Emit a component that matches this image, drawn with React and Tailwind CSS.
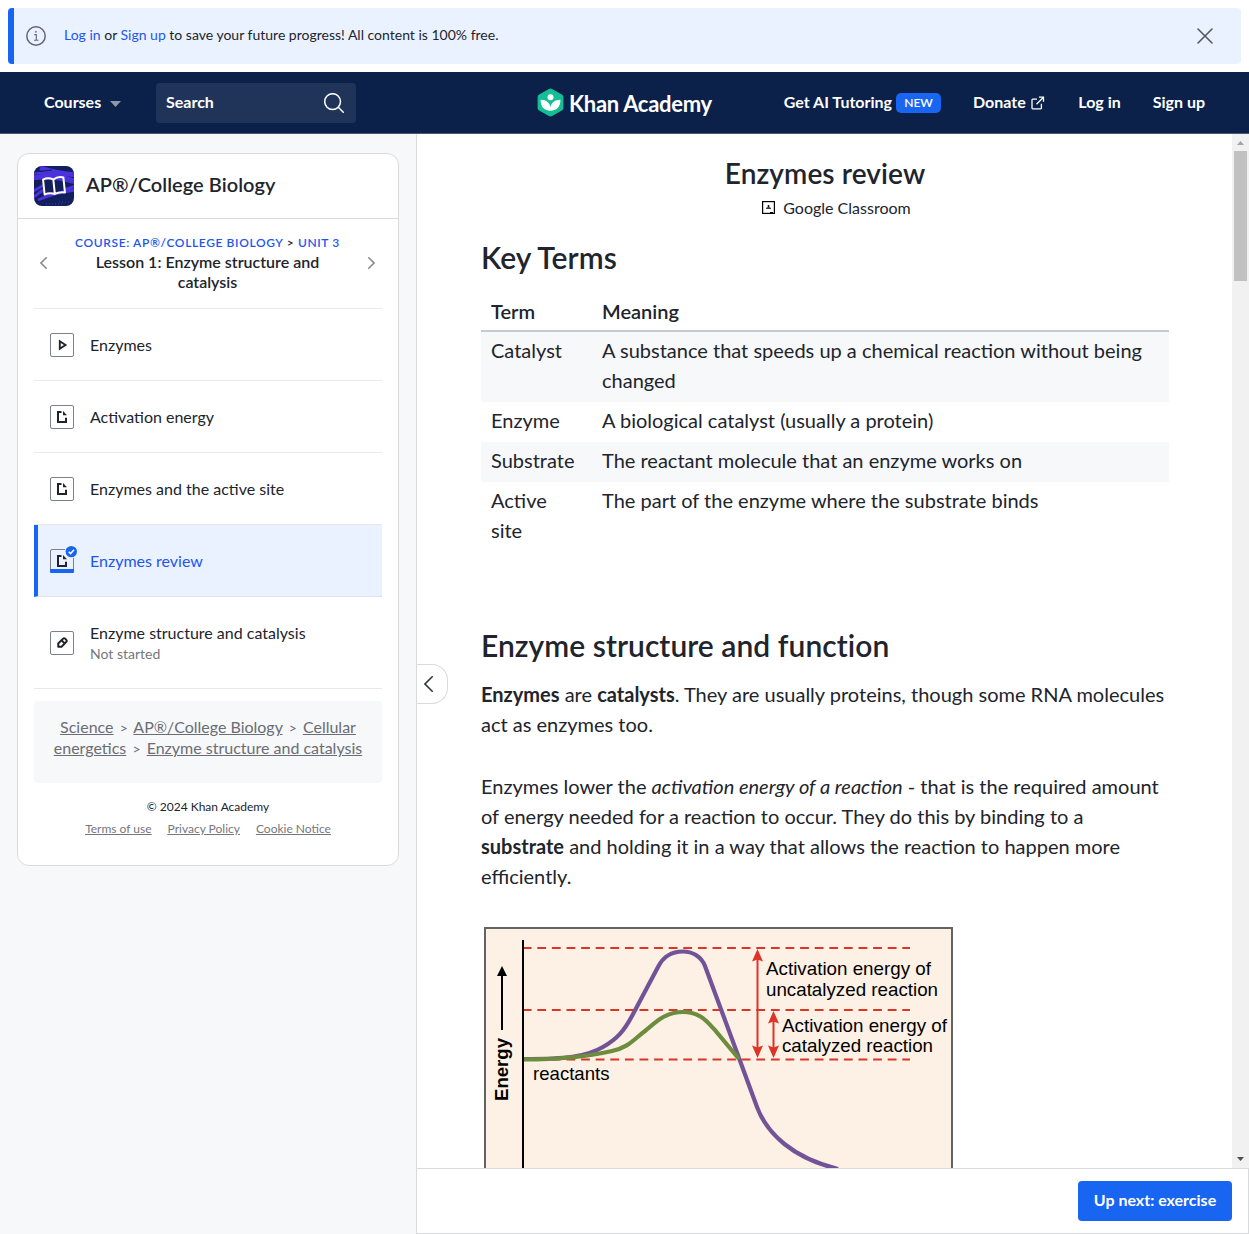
import React from "react";

const InfoIcon = () => (
  <svg className="h-5 w-5" viewBox="0 0 20 20" fill="none" stroke="#62656d" strokeWidth="1.5">
    <circle cx="10" cy="10" r="9.2" />
    <path d="M8.3 8.6h2v5.6M8 14.3h4.4" strokeWidth="1.1" />
    <circle cx="9.9" cy="5.8" r="0.9" fill="#62656d" stroke="none" />
  </svg>
);

const Alert = () => (
  <div className="m-2 flex h-14 items-center rounded bg-[#ebf2ff] border-l-[6px] border-[#1865f2] pl-3 pr-7 text-[14px]">
    <InfoIcon />
    <p className="ml-[18px] mb-[3px] flex-1">
      <a className="text-[#1e55f0]">Log in</a> or <a className="text-[#1e55f0]">Sign up</a> to save your future progress! All content is 100% free.
    </p>
    <svg className="h-4 w-4" viewBox="0 0 16 16" fill="none" stroke="#55585f" strokeWidth="1.6" strokeLinecap="round">
      <path d="M1 1l14 14M15 1L1 15" />
    </svg>
  </div>
);

const Logo = () => (
  <div className="flex items-center gap-[5px]">
    <svg className="h-[29px] w-[27px]" viewBox="0 0 27 29">
      <path d="M11.9.9q1.6-.9 3.2 0l9.7 5.5q1.6.9 1.6 2.7v10.800q0 1.800-1.600 2.700l-9.700 5.500q-1.600.9-3.200 0l-9.700-5.500Q.6 21.700.6 19.900V9.100q0-1.800 1.600-2.700z" fill="#14bf96" />
      <circle cx="13.500" cy="9.300" r="3" fill="#fff" />
      <path d="M13.500 22.800C7.800 22.800 3.400 19 3.600 11.800c5.400 0 9 2.700 9.900 7.400.9-4.700 4.500-7.400 9.900-7.400.2 7.200-4.200 11-9.900 11z" fill="#fff" />
    </svg>
    <span className="mt-[2px] text-[22px] font-bold leading-7 tracking-[-0.3px] whitespace-nowrap">Khan Academy</span>
  </div>
);

const Nav = () => (
  <header className="flex h-[62px] items-center border-b border-[#4a5878] bg-[#0b2149] pl-11 pr-11 text-[16px] font-bold text-white">
    <div className="flex w-28 items-center gap-[9px]">
      <span className="mb-0.5">Courses</span>
      <svg className="mt-0.5 h-[6px] w-[11px]" viewBox="0 0 11 6"><path d="M0 0h11L5.500 6z" fill="#8d97aa" /></svg>
    </div>
    <div className="flex h-10 w-[200px] items-center justify-between rounded bg-[#20345a] pl-[10px] pr-3">
      <span className="mb-0.5">Search</span>
      <svg className="h-5 w-5" viewBox="0 0 20 20" fill="none" stroke="#fff" strokeWidth="1.500" strokeLinecap="round">
        <circle cx="8.600" cy="8.600" r="7.900" /><path d="M14.300 14.300l5 5" />
      </svg>
    </div>
    <div className="ml-[181px]"><Logo /></div>
    <div className="ml-auto flex items-center gap-8">
      <span className="flex items-center gap-1">
        <span className="mb-0.5">Get AI Tutoring</span>
        <span className="flex h-5 w-[45px] items-center justify-center rounded-[5px] bg-[#1865f2] text-[12px] font-semibold">NEW</span>
      </span>
      <span className="flex items-center gap-[5px]">
        <span className="mb-0.5">Donate</span>
        <svg className="mr-[1.5px] h-[14px] w-[14px]" viewBox="0 0 14 14" fill="none" stroke="#fff" strokeWidth="1.300">
          <path d="M6 3.200H1.700q-.7 0-.7.700v8.200q0 .7.700.7h8q.7 0 .7-.7V7.800M8 1.200h4.500v4.500M12.500 1.200L5.500 8.200" />
        </svg>
      </span>
      <span className="mb-0.5">Log in</span>
      <span className="mb-0.5">Sign up</span>
    </div>
  </header>
);

const glyphs = {
  video: <path d="M9.800 8.200v7.600l5.700-3.800z" fill="none" stroke="#21242c" strokeWidth="1.900" />,
  article: (
    <g>
      <path d="M11.500 7H8v10h8v-4.200" fill="none" stroke="#21242c" strokeWidth="2" />
      <path d="M13 6l4 4.200h-4z" fill="#21242c" />
    </g>
  ),
  exercise: (
    <g transform="rotate(-45 12 12)" fill="none" stroke="#21242c" strokeWidth="2" strokeLinejoin="round">
      <path d="M6.700 12L9 9.700h6.500q1.800 0 1.800 1.800v1q0 1.800-1.800 1.800H9z" />
      <path d="M13.600 9.700v4.600" />
    </g>
  ),
};

const ItemIcon = ({ kind, done }) => (
  <svg className="h-6 w-6 shrink-0 overflow-visible" viewBox="0 0 24 24">
    <rect x="0.500" y="0.500" width="23" height="23" rx="1.500" fill={done ? "none" : "#fff"} stroke="#7d8087" />
    {glyphs[kind]}
    {done && (
      <g>
        <path d="M0 20h24v3q0 1-1 1H1q-1 0-1-1z" fill="#1865f2" />
        <circle cx="21.300" cy="2.600" r="6.600" fill="#ebf2ff" />
        <circle cx="21.300" cy="2.600" r="5.700" fill="#1865f2" />
        <path d="M18.700 2.700l1.900 1.900 3.400-3.800" fill="none" stroke="#fff" strokeWidth="1.500" />
      </g>
    )}
  </svg>
);

const items = [
  { kind: "video", title: "Enzymes" },
  { kind: "article", title: "Activation energy" },
  { kind: "article", title: "Enzymes and the active site" },
  { kind: "article", title: "Enzymes review", done: true },
  { kind: "exercise", title: "Enzyme structure and catalysis", note: "Not started" },
];

const CourseIcon = () => (
  <svg className="h-10 w-10 rounded-lg" viewBox="0 0 40 40">
    <rect width="40" height="40" fill="#11205a" />
    <g fill="none" stroke="#4b32dc">
      <path d="M6 2q15 5 36 7M-2 12q20-3 44 4" strokeWidth="5" />
      <path d="M-2 7q24 0 44 8" strokeWidth="3" />
      <path d="M-3 33L9 24M4 34q18-8 38-10M-2 26l12-7M30 24l12-4" strokeWidth="3" />
      <path d="M0 6l18-2M14 33q10-4 26-5" stroke="#11205a" strokeWidth="1" />
      <path d="M12 38h16M25 36h12" strokeWidth="1" strokeDasharray="1 2" />
    </g>
    <g transform="rotate(-6 20 20)" fill="none" stroke="#fff" strokeWidth="2" strokeLinejoin="round">
      <path d="M20 13.500Q15 10.500 9.800 12.500v15q5.200-1.500 10.200.5 5-2 10.200-.5v-15Q25 10.500 20 13.500zM20 13.500V28" />
    </g>
  </svg>
);

const Chevron = ({ flip }) => (
  <svg className={flip ? "h-3 w-[7px] rotate-180" : "h-3 w-[7px]"} viewBox="0 0 7 12" fill="none" stroke="#888b90" strokeWidth="1.600" strokeLinecap="round">
    <path d="M6.200.8L1 6l5.200 5.200" />
  </svg>
);

const Crumb = ({ children }) => <a className="underline">{children}</a>;
const Sep = () => <span className="mx-0.5 text-[14px] leading-none">&gt;</span>;

const Sidebar = () => (
  <aside className="w-[417px] shrink-0 border-r border-[#d9dadc] bg-[#f7f8fa] pl-[17px] pt-[19px]">
    <div className="h-[713px] w-[382px] rounded-xl border border-[#d9dadc] bg-white">
      <div className="flex items-center gap-3 border-b border-[#d9dadc] px-4 py-3">
        <CourseIcon />
        <h2 className="mb-1 text-[20px] font-semibold leading-6 tracking-[0.05px]">AP®/College Biology</h2>
      </div>
      <div className="px-4">
        <div className="flex h-[90px] items-center justify-between border-b border-[#e8e9ea] pb-px pl-[6px] pr-[7px]">
          <Chevron />
          <div className="w-[290px] text-center">
            <div className="-mb-px mt-px whitespace-nowrap text-[12px] font-semibold leading-4 tracking-[0.62px]">
              <a className="text-[#1e55f0]">COURSE: AP®/COLLEGE BIOLOGY</a> &gt; <a className="text-[#1e55f0]">UNIT 3</a>
            </div>
            <div className="mx-auto mt-0.5 w-[250px] text-[16px] font-semibold leading-5">Lesson 1: Enzyme structure and catalysis</div>
          </div>
          <Chevron flip />
        </div>
        <ul>
          {items.map((it) => (
            <li
              key={it.title}
              className={
                (it.note ? "h-[92px] " : "h-[72px] ") +
                (it.done ? "border-l-4 border-l-[#1865f2] bg-[#ebf2ff] pl-3 text-[#1e55f0] border-b-[#dbe2f0] " : "pl-4 border-b-[#e8e9ea] ") +
                "flex items-center gap-4 border-b"
              }
            >
              <ItemIcon kind={it.kind} done={it.done} />
              <div>
                <div className="text-[16px] leading-5">{it.title}</div>
                {it.note && <div className="-mb-px mt-px text-[14px] leading-5 text-[#75777d]">{it.note}</div>}
              </div>
            </li>
          ))}
        </ul>
        <div className="mt-3 h-[82px] rounded bg-[#f7f8fa] px-4 pt-[15px] text-center text-[16px] leading-[21px] text-[#6b6d74]">
          <Crumb>Science</Crumb> <Sep /> <Crumb>AP®/College Biology</Crumb> <Sep /> <Crumb>Cellular energetics</Crumb> <Sep />{" "}
          <Crumb>Enzyme structure and catalysis</Crumb>
        </div>
        <p className="mt-4 text-center text-[12px] leading-4">© 2024 Khan Academy</p>
        <div className="mt-[6px] flex justify-center gap-4 text-[12px] leading-4 text-[#75777d] underline">
          <a>Terms of use</a><a>Privacy Policy</a><a>Cookie Notice</a>
        </div>
      </div>
    </div>
  </aside>
);

const rows = [
  ["Catalyst", "A substance that speeds up a chemical reaction without being changed"],
  ["Enzyme", "A biological catalyst (usually a protein)"],
  ["Substrate", "The reactant molecule that an enzyme works on"],
  ["Active site", "The part of the enzyme where the substrate binds"],
];

const DoubleArrow = ({ x, top, bottom }) => (
  <g fill="#dc3527">
    <path d={`M${x} ${top + 7}V${bottom - 7}`} stroke="#dc3527" strokeWidth="2" />
    <path d={`M${x} ${top}l5.500 12.500-5.500-2-5.500 2z`} />
    <path d={`M${x} ${bottom}l5.500-12.500-5.500 2-5.500-2z`} />
  </g>
);

const EnergyChart = () => (
  <svg className="ml-[3px] block h-[300px] w-[469px]" viewBox="484 927 469 300" fontFamily="Liberation Sans, Arial, sans-serif">
    <rect x="485" y="928" width="467" height="320" fill="#fdf0e4" stroke="#626365" strokeWidth="2" />
    <g stroke="#dc3527" strokeWidth="2" strokeDasharray="8.800 5.800">
      <path d="M522.700 948h387.300M522.700 1010h387.300M522.700 1059.500h387.300" />
    </g>
    <path d="M523 940v300" stroke="#000" strokeWidth="2" />
    <g fill="none" strokeWidth="4.200">
      <path d="M524 1059C565 1059 586 1057 603 1047C617 1039 624 1031 632 1016L658 967C664 955 674 951.500 683 951.500C692 951.500 701 956 705 966L739 1058L757 1107C767 1134 793 1158 838 1169" stroke="#735397" />
      <path d="M524 1059.500C560 1059.500 590 1056 612 1051C629 1047 633 1040 645 1031C656 1022 665 1012 683 1012C701 1012 708 1023 714 1029L739 1059" stroke="#6c8d3d" />
    </g>
    <path d="M502 1030V972" stroke="#000" strokeWidth="2" />
    <path d="M502 966l5 10h-10z" />
    <DoubleArrow x={757.5} top={949} bottom={1058} />
    <DoubleArrow x={773.5} top={1011} bottom={1058} />
    <g fontSize="19">
      <text x="766" y="975" textLength="165" lengthAdjust="spacingAndGlyphs">Activation energy of</text>
      <text x="766" y="995.500" textLength="172" lengthAdjust="spacingAndGlyphs">uncatalyzed reaction</text>
      <text x="782" y="1031.500" textLength="165" lengthAdjust="spacingAndGlyphs">Activation energy of</text>
      <text x="782" y="1052" textLength="151" lengthAdjust="spacingAndGlyphs">catalyzed reaction</text>
      <text x="533" y="1080" textLength="76.500" lengthAdjust="spacingAndGlyphs">reactants</text>
      <text transform="translate(508 1101) rotate(-90)" fontWeight="bold" textLength="63" lengthAdjust="spacingAndGlyphs">Energy</text>
    </g>
  </svg>
);

const Scrollbar = () => (
  <div className="flex w-[17px] shrink-0 flex-col items-center bg-[#f1f1f1]">
    <svg className="mt-[7px] h-1 w-[7px]" viewBox="0 0 7 4"><path d="M3.500 0L7 4H0z" fill="#a3a3a3" /></svg>
    <div className="mt-[6px] h-[130px] w-[13px] bg-[#c1c1c1]" />
    <svg className="mb-[7px] mt-auto h-1 w-[7px]" viewBox="0 0 7 4"><path d="M0 0h7L3.500 4z" fill="#505050" /></svg>
  </div>
);

const Article = () => (
  <article className="min-w-0 flex-1 overflow-hidden pl-16 pr-[63px] text-[20px] leading-[30px]">
    <h1 className="mt-[23px] text-center text-[28px] font-semibold leading-8 tracking-[0.1px]">Enzymes review</h1>
    <div className="mt-[9px] flex items-center justify-center gap-2 pl-[23px] text-[16px] leading-5">
      <svg className="-mt-0.5 h-[13px] w-[13px]" viewBox="0 0 13 13">
        <rect x="0.600" y="0.600" width="11.800" height="11.800" fill="#fff" stroke="#000" strokeWidth="1.200" />
        <path d="M4 7.800h5v-.8L7.300 6.300h-1.600L4 7zM8 11h3v1H8z" />
        <circle cx="6.500" cy="5" r="1" />
      </svg>
      Google Classroom
    </div>
    <h2 className="mt-[21px] text-[30px] font-semibold leading-9 tracking-[0.05px]">Key Terms</h2>
    <table className="mt-[21px] w-[688px] table-fixed text-left">
      <thead>
        <tr className="border-b-2 border-[#c9cacd] align-top">
          <th className="w-[111px] px-[10px] pb-1 font-semibold">Term</th>
          <th className="px-[10px] pb-1 font-semibold">Meaning</th>
        </tr>
      </thead>
      <tbody>
        {rows.map(([term, meaning]) => (
          <tr key={term} className="align-top odd:bg-[#f7f8fa]">
            <td className="px-[10px] pb-[7px] pt-[3px]">{term}</td>
            <td className="px-[10px] pb-[7px] pt-[3px]">{meaning}</td>
          </tr>
        ))}
      </tbody>
    </table>
    <h2 className="mt-[75px] text-[30px] font-semibold leading-9 tracking-[0.05px]">Enzyme structure and function</h2>
    <p className="mt-4">
      <b>Enzymes</b> are <b>catalysts</b>. They are usually proteins, though some RNA molecules act as enzymes too.
    </p>
    <p className="mt-8">
      Enzymes lower the <i>activation energy of a reaction</i> - that is the required amount of energy needed for a reaction to occur. They do this by binding to a <b>substrate</b> and holding it in a way that allows the reaction to happen more efficiently.
    </p>
    <div className="mt-9"><EnergyChart /></div>
  </article>
);

export default function App() {
  return (
    <div className="flex h-[1234px] w-[1249px] flex-col overflow-hidden bg-white font-['Lato',sans-serif] text-[#21242c]">
      <Alert />
      <Nav />
      <div className="flex min-h-0 flex-1">
        <Sidebar />
        <main className="relative flex min-w-0 flex-1 flex-col">
          <div className="flex min-h-0 flex-1">
            <Article />
            <Scrollbar />
          </div>
          <footer className="flex h-[66px] shrink-0 items-center justify-end border-y border-r border-[#d9dadc] pr-4">
            <button className="h-10 w-[154px] rounded bg-[#1865f2] pb-0.5 text-[16px] font-bold text-white">Up next: exercise</button>
          </footer>
          <button className="absolute left-0 top-[530px] flex h-10 w-[31px] items-center rounded-r-2xl border border-l-0 border-[#d9dadc] bg-white pl-[7px]">
            <svg className="h-4 w-[9px]" viewBox="0 0 9 16" fill="none" stroke="#33363d" strokeWidth="1.600" strokeLinecap="round">
              <path d="M8.200.8L1 8l7.200 7.200" />
            </svg>
          </button>
        </main>
      </div>
    </div>
  );
}
